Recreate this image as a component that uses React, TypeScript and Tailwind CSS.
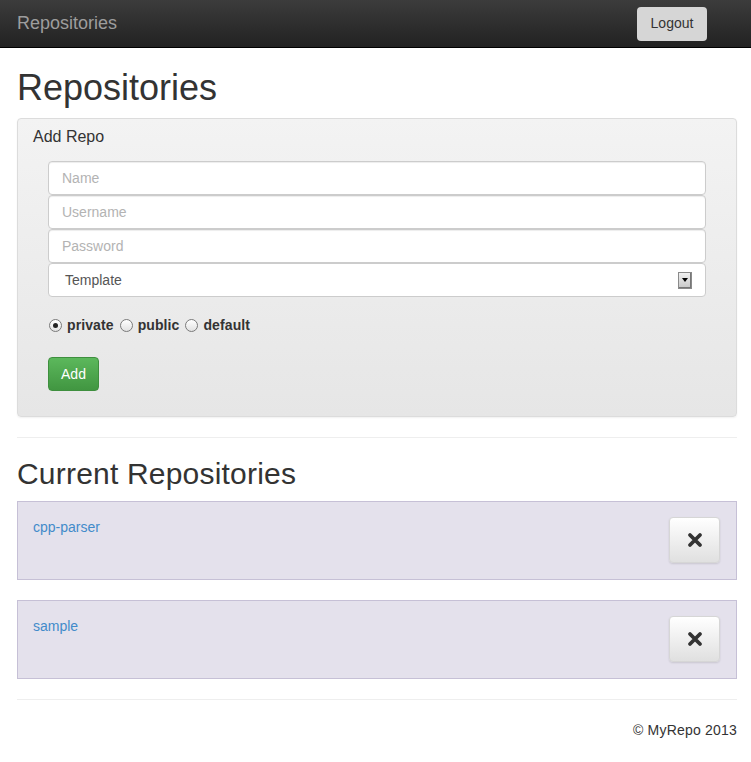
import { useState } from "react";

const repos = ["cpp-parser", "sample"];

function CrossIcon() {
  return (
    <svg width="16" height="16" viewBox="0 0 16 16" aria-hidden="true">
      <path
        d="M3 3 L13 13 M13 3 L3 13"
        stroke="#333"
        strokeWidth="3.8"
        strokeLinecap="round"
        fill="none"
      />
    </svg>
  );
}

export default function App() {
  const [visibility, setVisibility] = useState("private");

  return (
    <div className="min-h-[762px] bg-white text-[14px] text-[#333] font-['Liberation_Sans',Arial,sans-serif]">
      {/* Top bar */}
      <nav className="flex h-[48px] items-center justify-between border-b border-black bg-gradient-to-b from-[#3c3c3c] to-[#222] pl-[17px] pr-[44px]">
        <span className="text-[18px] text-[#9d9d9d]">Repositories</span>
        <button className="h-[34px] w-[70px] rounded-[4px] bg-[#d6d6d6] text-[14px] text-[#333]">
          Logout
        </button>
      </nav>

      <main className="pl-[17px] pr-[14px]">
        <h1 className="mt-[20px] mb-[10px] text-[36px] leading-[40px] font-normal">
          Repositories
        </h1>

        {/* Add repo form */}
        <div className="rounded-[4px] border border-[#dcdcdc] bg-gradient-to-b from-[#f3f3f3] to-[#e6e6e6] px-[30px] pt-[8px] pb-[25px] shadow-[0_1px_2px_rgba(0,0,0,0.06)]">
          <div className="-ml-[15px] text-[16px] leading-[20px]">Add Repo</div>
          <div className="mt-[14px] flex flex-col">
            {["Name", "Username", "Password"].map((p) => (
              <input
                key={p}
                type={p === "Password" ? "password" : "text"}
                placeholder={p}
                className="h-[34px] rounded-[4px] border border-[#ccc] bg-white px-[13px] text-[14px] text-[#555] placeholder:text-[#b3b3b3] shadow-[inset_0_1px_1px_rgba(0,0,0,0.075)] outline-none"
              />
            ))}
            <div className="flex h-[34px] items-center justify-between rounded-[4px] border border-[#ccc] bg-white pl-[16px] pr-[13px] text-[14px] text-[#555]">
              <span>Template</span>
              <span className="flex h-[17px] w-[14px] items-center justify-center border border-[#8a8a8a] bg-gradient-to-b from-[#f0f0f0] to-[#c8c8c8] shadow-[inset_-1px_-1px_0_#777]">
                <span className="h-0 w-0 border-x-[3px] border-t-[4px] border-x-transparent border-t-black" />
              </span>
            </div>
          </div>

          <div className="mt-[18px] flex items-center gap-[6px] pl-[1px] text-[14px] leading-[20px] font-bold">
            {["private", "public", "default"].map((v) => (
              <label
                key={v}
                className="flex cursor-pointer items-center gap-[5px]"
                onClick={() => setVisibility(v)}
              >
                <span className="flex h-[13px] w-[13px] items-center justify-center rounded-full border border-[#7a7a7a] bg-gradient-to-b from-white to-[#e2e2e2]">
                  {visibility === v && (
                    <span className="h-[5px] w-[5px] rounded-full bg-[#222]" />
                  )}
                </span>
                <span className="tracking-[0.1px]">{v}</span>
              </label>
            ))}
          </div>

          <button className="mt-[22px] h-[34px] w-[51px] rounded-[4px] border border-[#3e8f3e] bg-gradient-to-b from-[#5cb85c] to-[#419641] text-[14px] text-white">
            Add
          </button>
        </div>

        <hr className="mt-[20px] border-t border-[#eee]" />

        <h2 className="mt-[19px] mb-[11px] text-[30px] leading-[33px] font-normal tracking-[0.2px]">
          Current Repositories
        </h2>

        <div className="flex flex-col gap-[20px]">
          {repos.map((name) => (
            <div
              key={name}
              className="flex h-[79px] items-start justify-between border border-[#c6c0d6] bg-[#e4e1ec] pl-[15px] pr-[16px] pt-[15px]"
            >
              <a href="#" className="leading-[20px] text-[#428bca]">
                {name}
              </a>
              <button className="flex h-[46px] w-[51px] items-center justify-center rounded-[4px] border border-[#d6d6d6] bg-gradient-to-b from-white to-[#e0e0e0] shadow-[0_1px_2px_rgba(0,0,0,0.12)]">
                <CrossIcon />
              </button>
            </div>
          ))}
        </div>

        <hr className="mt-[20px] border-t border-[#eee]" />

        <footer className="pt-[20px] pb-[21px] text-right leading-[20px] tracking-[0.2px]">
          © MyRepo 2013
        </footer>
      </main>
    </div>
  );
}
